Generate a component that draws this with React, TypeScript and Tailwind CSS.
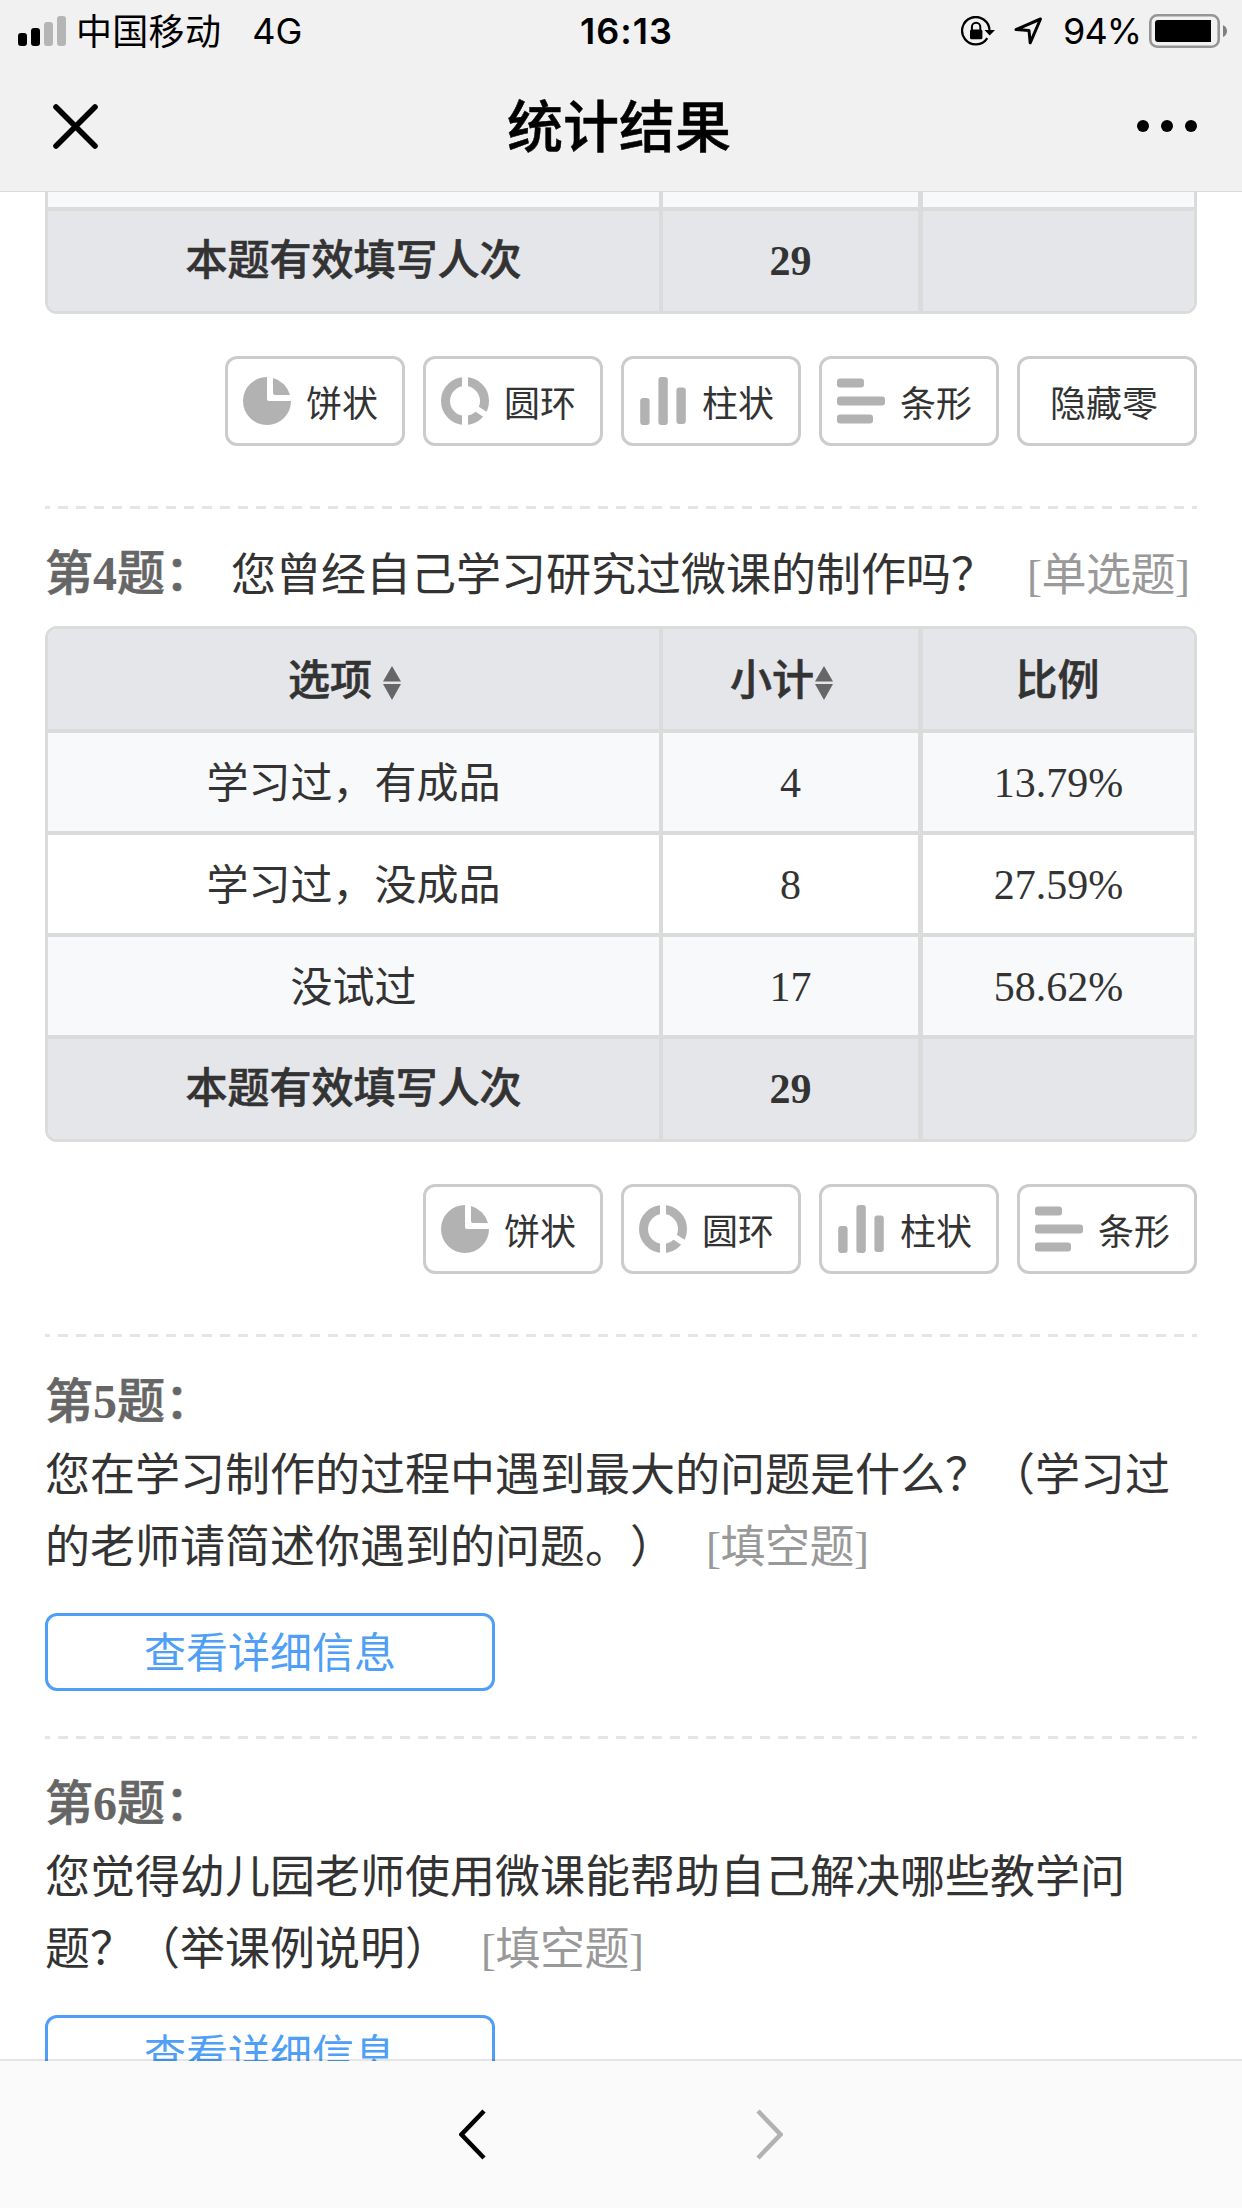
import React from "react";

type ChartKind = "pie" | "ring" | "column" | "bar";

const labels: Record<ChartKind, string> = {
  pie: "饼状",
  ring: "圆环",
  column: "柱状",
  bar: "条形",
};

const kinds: ChartKind[] = ["pie", "ring", "column", "bar"];

function ChartIcon({ kind }: { kind: ChartKind }) {
  return (
    <svg className="size-12 shrink-0 fill-[#b2b2b2]" viewBox="0 0 48 48">
      {kind === "pie" && (
        <>
          <path d="M24 0A24 24 0 1 0 48 24H26Q24 24 24 22Z" />
          <path d="M30 1A24 24 0 0 1 47 18H32Q30 18 30 16Z" />
        </>
      )}
      {kind === "ring" && (
        <>
          <circle cx="24" cy="24" r="19.5" fill="none" stroke="#b2b2b2" strokeWidth="9" />
          <path d="M24 0V12M24 36V48M34 30.7L48 40" fill="none" stroke="#fff" strokeWidth="6" />
        </>
      )}
      {kind === "column" && (
        <>
          <rect x="1.2" y="21" width="9.4" height="27" rx="3" />
          <rect x="19.4" y="0" width="9.4" height="48" rx="3" />
          <rect x="37.4" y="10.5" width="9.4" height="36.5" rx="3" />
        </>
      )}
      {kind === "bar" && (
        <>
          <rect x="0" y="1.4" width="27" height="9.2" rx="3" />
          <rect x="0" y="19.4" width="48" height="9.2" rx="3" />
          <rect x="0" y="37.4" width="36" height="9.2" rx="3" />
        </>
      )}
    </svg>
  );
}

const chartButton =
  "flex h-[90px] w-[180px] items-center rounded-xl border-[3px] border-[#ccc] text-[36px] leading-[54px] text-[#333]";

function ChartButtons({ hideZero = false }: { hideZero?: boolean }) {
  return (
    <div className="mt-[42px] flex justify-end gap-[18px]">
      {kinds.map((k) => (
        <button key={k} className={`${chartButton} gap-[15px] pl-[15px]`}>
          <ChartIcon kind={k} />
          <span className="pt-[7px]">{labels[k]}</span>
        </button>
      ))}
      {hideZero && (
        <button className={`${chartButton} justify-center pr-1.5`}>
          <span className="pt-[7px]">隐藏零</span>
        </button>
      )}
    </div>
  );
}

function Divider({ className }: { className: string }) {
  return (
    <div
      className={`h-[3px] bg-[repeating-linear-gradient(90deg,#e5e5e5_0_5px,transparent_5px_13px,#e5e5e5_13px_18px)] ${className}`}
    />
  );
}

function Sorter() {
  return (
    <svg className="mt-[5px] h-[34px] w-[18px] fill-[#666]" viewBox="0 0 18 34">
      <path d="M9 0L18 15.5H0ZM9 34L0 18H18Z" />
    </svg>
  );
}

function Row({ cells, className }: { cells: React.ReactNode[]; className: string }) {
  return (
    <div className={`grid grid-cols-[615px_260px_271px] text-[42px] leading-[60px] text-[#333] ${className}`}>
      <div className="flex items-center justify-center border-r-4 border-[#dadcdb] pt-[3px]">{cells[0]}</div>
      <div className="flex items-center justify-center border-r-[5px] border-[#dadcdb] pt-0.5">{cells[1]}</div>
      <div className="flex items-center justify-center pt-0.5">{cells[2]}</div>
    </div>
  );
}

function TotalRow() {
  return (
    <Row
      className="h-[100px] bg-[#e4e6ea] font-medium"
      cells={[
        <span className="pb-[3px] [-webkit-text-stroke:0.6px]">本题有效填写人次</span>,
        <span className="pb-0.5 font-bold">29</span>,
        "",
      ]}
    />
  );
}

function Tag({ children }: { children: string }) {
  return <span className="ml-[31px] tracking-[-0.5px] text-[#999]">[{children}]</span>;
}

function Title({ n }: { n: number }) {
  return (
    <div className="text-[48px] font-medium text-[#666] [-webkit-text-stroke:0.6px]">
      第<span className="font-bold [-webkit-text-stroke:0]">{n}</span>题：
    </div>
  );
}

function DetailButton() {
  return (
    <button className="mt-8 flex h-[78px] w-[450px] items-center justify-center rounded-xl border-[3px] border-[#4e9ff5] pt-[3px] text-[42px] leading-[60px] text-[#4e9ff5]">
      查看详细信息
    </button>
  );
}

function BlankQuestion({ n, children }: { n: number; children: React.ReactNode }) {
  return (
    <section className="whitespace-nowrap pt-[29px] text-[45px] leading-[72px] text-[#333]">
      <Title n={n} />
      <p className="-mb-[3px] pt-0.5">{children}</p>
      <DetailButton />
    </section>
  );
}

const options = [
  { name: "学习过，有成品", count: "4", ratio: "13.79%", bg: "bg-[#f8f9fb]" },
  { name: "学习过，没成品", count: "8", ratio: "27.59%", bg: "bg-white" },
  { name: "没试过", count: "17", ratio: "58.62%", bg: "bg-[#f8f9fb]" },
];

function StatusBar() {
  return (
    <div className="grid h-[60px] grid-cols-3 items-center pt-0.5 text-[36px] leading-[44px]">
      <div className="flex items-center pl-[18px]">
        <svg className="h-[30px] w-12" viewBox="0 0 48 30">
          <rect x="0" y="17" width="9" height="13" rx="3" />
          <rect x="13" y="12" width="9" height="18" rx="3" />
          <rect x="26" y="6" width="9" height="24" rx="3" fill="#b5b5b5" />
          <rect x="39" y="0" width="9" height="30" rx="3" fill="#b5b5b5" />
        </svg>
        <span className="ml-2.5 pt-0.5 tracking-[0.3px]">中国移动</span>
        <span className="ml-[31px]">4G</span>
      </div>
      <div className="pl-[11px] text-center font-semibold tracking-[1px]">16:13</div>
      <div className="flex items-center justify-end pr-[15px]">
        <svg className="h-[30px] w-[34px]" viewBox="0 0 34 30">
          <path d="M26.3 22.2A13.7 13.7 0 1 1 28.5 14.5" fill="none" stroke="#000" strokeWidth="2.3" />
          <path d="M23.5 14H34L28.7 19.5Z" />
          <rect x="9" y="13.5" width="12.4" height="9.7" rx="1.5" />
          <path d="M10.9 14V11A4.2 4.2 0 0 1 19.3 11V14" fill="none" stroke="#000" strokeWidth="2" />
        </svg>
        <svg className="ml-[19px] h-7 w-[29px]" viewBox="0 0 29 28">
          <path d="M2 12.6L26.5 2L16.2 25.8L15 13.4Z" fill="none" stroke="#000" strokeWidth="3" strokeLinejoin="round" />
        </svg>
        <span className="ml-5 tracking-[-1px]">94%</span>
        <svg className="ml-2 h-[34px] w-[78px]" viewBox="0 0 78 34">
          <rect x="1.3" y="1.3" width="68.4" height="31.4" rx="7" fill="none" stroke="#959595" strokeWidth="2.6" />
          <path d="M9 6H62V28H9Q6 28 6 25V9Q6 6 9 6Z" />
          <path d="M74 11Q78 13 78 17T74 23Z" fill="#808080" />
        </svg>
      </div>
    </div>
  );
}

export default function App() {
  return (
    <div className="flex h-[2208px] w-[1242px] flex-col overflow-hidden bg-white font-['Liberation_Serif','Noto_Sans_CJK_SC',serif] [text-spacing-trim:space-all]">
      <header className="h-48 shrink-0 border-b border-[#dadada] bg-[#f1f1f1] font-[Inter,'Noto_Sans_CJK_SC',sans-serif] text-black">
        <StatusBar />
        <div className="grid h-[131px] grid-cols-[1fr_auto_1fr] items-center pl-[53px] pr-[45px] pt-px">
          <svg className="size-[45px]" viewBox="0 0 45 45">
            <path d="M3 3L42 42M42 3L3 42" stroke="#000" strokeWidth="5.6" strokeLinecap="round" />
          </svg>
          <h1 className="pr-3 pt-0.5 text-[56px] font-medium leading-[80px] [-webkit-text-stroke:0.5px]">统计结果</h1>
          <svg className="h-3 w-[60px] justify-self-end" viewBox="0 0 60 12">
            <circle cx="6" cy="6" r="6" />
            <circle cx="30" cy="6" r="6" />
            <circle cx="54" cy="6" r="6" />
          </svg>
        </div>
      </header>

      <main className="h-[1869px] shrink-0 overflow-hidden px-[45px]">
        <div className="overflow-hidden rounded-b-xl border-[3px] border-t-0 border-[#dadcdb]">
          <Row className="h-[19px] border-b-4 border-[#dadcdb] bg-[#f8f9fb]" cells={["", "", ""]} />
          <TotalRow />
        </div>
        <ChartButtons hideZero />
        <Divider className="mt-[60px]" />

        <section className="pt-7">
          <div className="flex h-[72px] whitespace-nowrap text-[45px] leading-[72px] text-[#333]">
            <div className="w-[186px] pt-px">
              <Title n={4} />
            </div>
            <div className="pt-[3px]">
              您曾经自己学习研究过微课的制作吗？<Tag>单选题</Tag>
            </div>
          </div>
          <div className="mt-[17px] overflow-hidden rounded-xl border-[3px] border-[#dadcdb]">
            <Row
              className="h-[104px] border-b-4 border-[#dadcdb] bg-[#e4e6ea] font-medium [-webkit-text-stroke:0.6px]"
              cells={[
                <div className="flex items-center gap-[11px] pr-[18px]">选项<Sorter /></div>,
                <div className="flex items-center gap-px pr-[18px] pt-px">小计<Sorter /></div>,
                <span className="pr-0.5 pt-px">比例</span>,
              ]}
            />
            {options.map((o) => (
              <Row
                key={o.name}
                className={`h-[102px] border-b-4 border-[#dadcdb] ${o.bg}`}
                cells={[o.name, o.count, o.ratio]}
              />
            ))}
            <TotalRow />
          </div>
          <ChartButtons />
        </section>
        <Divider className="mt-[60px]" />

        <BlankQuestion n={5}>
          您在学习制作的过程中遇到最大的问题是什么？（学习过
          <br />
          的老师请简述你遇到的问题。）<Tag>填空题</Tag>
        </BlankQuestion>
        <Divider className="mt-[45px]" />

        <BlankQuestion n={6}>
          您觉得幼儿园老师使用微课能帮助自己解决哪些教学问
          <br />
          题？（举课例说明）<Tag>填空题</Tag>
        </BlankQuestion>
      </main>

      <footer className="relative -mt-0.5 flex h-[149px] shrink-0 justify-between border-t-2 border-black/10 bg-[#fafafa] bg-clip-padding pl-[459px] pr-[459px] pt-12">
        <svg className="h-[51px] w-[27px]" viewBox="0 0 27 51">
          <path d="M25 2L2.5 25.5L25 49" fill="none" stroke="#000" strokeWidth="4.5" />
        </svg>
        <svg className="h-[51px] w-[27px]" viewBox="0 0 27 51">
          <path d="M2 2L24.5 25.5L2 49" fill="none" stroke="#b2b2b2" strokeWidth="4.5" />
        </svg>
      </footer>
    </div>
  );
}
